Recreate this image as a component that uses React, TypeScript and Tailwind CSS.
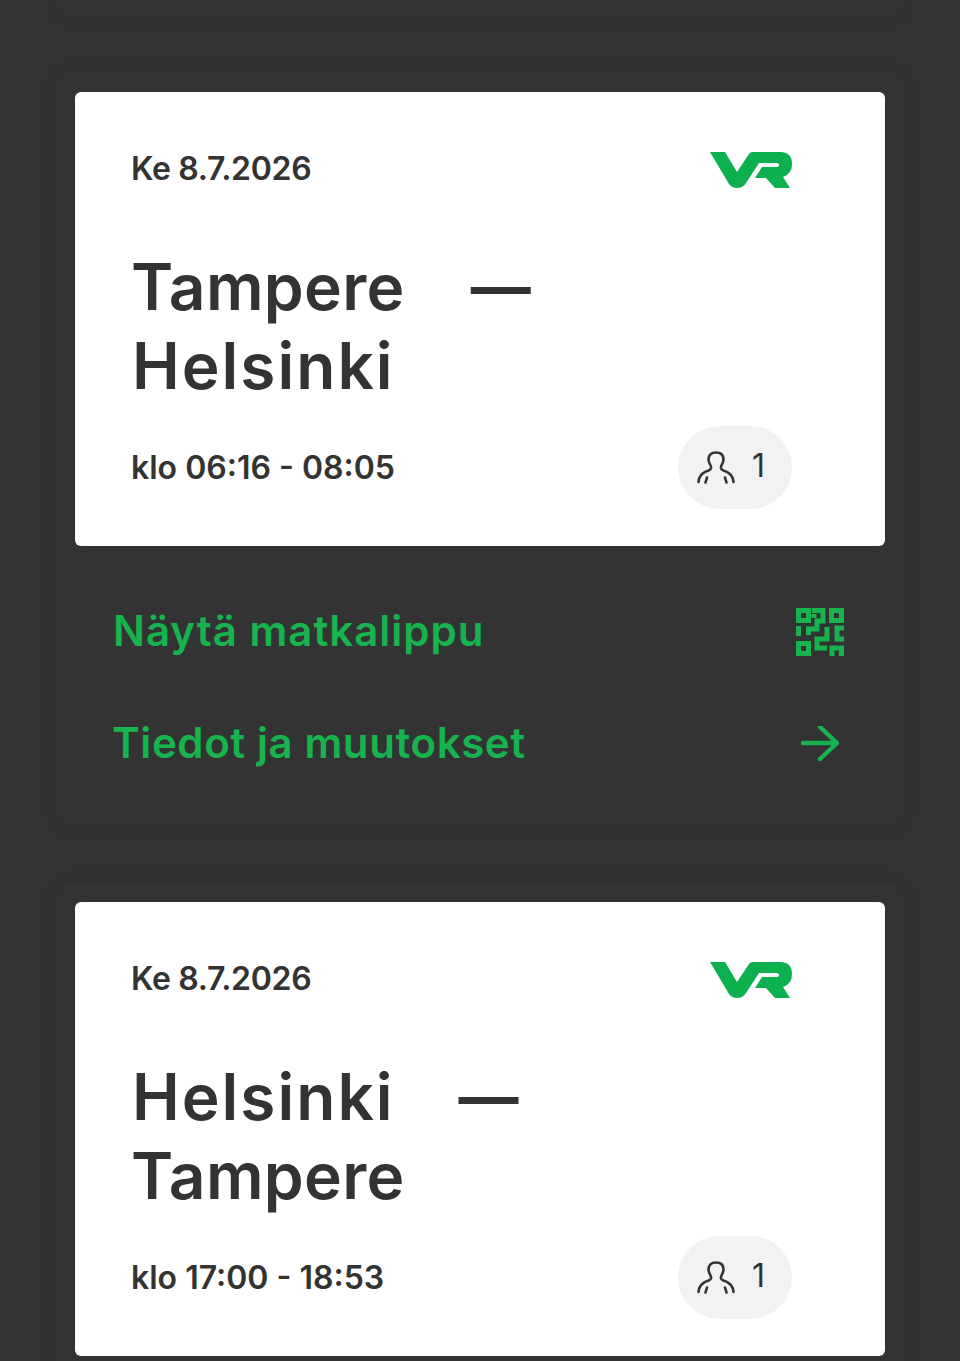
import React from "react";

const font = { fontFamily: '"Inter", "Noto Sans", sans-serif' };

function VrLogo() {
  return (
    <svg viewBox="0 0 82 36" className="block h-9 w-[82px]" fill="#0cb04f">
      <path d="M0 0H15L27 20L39 2Q40 0 43 0H70Q82 0 82 12Q82 22 73 25L80 36H65L56 26H45L52 15H66Q69 15 69 13Q69 11 66 11H49L36 31Q33 36 27 36Q22 36 19 32Z" />
    </svg>
  );
}

function PersonIcon() {
  return (
    <svg viewBox="0 0 38 33" className="block h-[33px] w-[38px]" fill="none" stroke="#333" strokeWidth="2.6" strokeLinecap="round" strokeLinejoin="round">
      <path d="M1.5 31C2 25 5 21.5 11.5 19.5C14.5 18.5 14.5 16.5 13.5 14.5C12.5 12.5 11.5 10.5 11.5 8.5C11.5 3.5 14.5 1.5 19 1.5C23.5 1.5 26.5 3.5 26.5 8.5C26.5 10.5 25.5 12.5 24.5 14.5C23.5 16.5 23.5 18.5 26.5 19.5C33 21.5 36 25 36.5 31" />
      <path d="M10 26.5L8.5 31.5M28 26.5L29.5 31.5" />
    </svg>
  );
}

function QrIcon() {
  return (
    <svg viewBox="0 0 48 48" className="block h-12 w-12" fill="none" stroke="#17b34f" strokeWidth="5">
      <rect x="2.5" y="2.5" width="10" height="10" />
      <rect x="35.5" y="2.5" width="10" height="10" />
      <rect x="2.5" y="35.5" width="10" height="10" />
      <path d="M16 2.5H27V13H21V21H12.5V27" />
      <path d="M18 6V10" />
      <path d="M2.5 18V28" />
      <path d="M31 19V31H21V40H31" />
      <path d="M48 20H41V31H48" />
      <path d="M36 48V40H45.5V48" />
    </svg>
  );
}

function ArrowIcon() {
  return (
    <svg viewBox="0 0 38 36" className="block h-9 w-[38px]" fill="none" stroke="#17b34f" strokeWidth="4.4" strokeLinecap="round" strokeLinejoin="round">
      <path d="M2 17H35M19 1L36 17L19 33" />
    </svg>
  );
}

function Ticket({ from, to, time }: { from: string; to: string; time: string }) {
  const helsinki = "tracking-[2px] pl-px";
  const tampere = "tracking-[0.3px]";
  return (
    <div className="rounded-[6px] bg-white pl-[56px] pr-[93px] pt-[60px] pb-[37px] text-[#333]">
      <div className="flex h-9 items-center justify-between">
        <span className="pb-[2px] text-[32px] font-semibold leading-9 tracking-[-0.3px]">Ke 8.7.2026</span>
        <VrLogo />
      </div>
      <div className="mt-[59px] text-[64px] font-semibold leading-[79px]">
        <div className="flex items-center">
          <span className={from === "Helsinki" ? helsinki : tampere}>{from}</span>
          <span className={from === "Helsinki" ? "ml-16 text-[60px] font-bold tracking-normal" : "ml-[66px] text-[60px] font-bold tracking-normal"}>—</span>
        </div>
        <div className={to === "Helsinki" ? helsinki : tampere}>{to}</div>
      </div>
      <div className="mt-[21px] flex items-center justify-between">
        <span className="text-[32px] font-semibold leading-9">{time}</span>
        <div className="flex h-[83px] w-[114px] items-center gap-[17px] rounded-full bg-[#f2f2f2] pl-[19px]">
          <PersonIcon />
          <span className="-mt-1 text-[32px] leading-9">1</span>
        </div>
      </div>
    </div>
  );
}

export default function App() {
  return (
    <div className="h-[1361px] overflow-hidden bg-[#333]" style={font}>
      <div className="mx-14 h-4 rounded-b-2xl bg-[#333] shadow-[0_0_16px_rgba(0,0,0,0.12)]" />
      <div className="mx-14 mt-14 rounded-2xl bg-[#333] p-[19px] pt-5 pb-[58px] shadow-[0_0_16px_rgba(0,0,0,0.12)]">
        <Ticket from="Tampere" to="Helsinki" time="klo 06:16 - 08:05" />
        <div className="mt-[62px] flex h-12 items-center justify-between pl-[38px] pr-[41px] text-[42px] font-semibold tracking-[1px] text-[#17b34f]">
          <span className="pb-[3px] leading-[48px]">Näytä matkalippu</span>
          <QrIcon />
        </div>
        <div className="mt-16 flex h-12 items-center justify-between pl-[37px] pr-[46px] text-[42px] font-semibold tracking-[0.6px] text-[#17b34f]">
          <span className="pb-[3px] leading-[48px]">Tiedot ja muutokset</span>
          <ArrowIcon />
        </div>
      </div>
      <div className="mx-14 mt-14 rounded-2xl bg-[#333] p-[19px] pt-5 pb-[58px] shadow-[0_0_16px_rgba(0,0,0,0.12)]">
        <Ticket from="Helsinki" to="Tampere" time="klo 17:00 - 18:53" />
      </div>
    </div>
  );
}
